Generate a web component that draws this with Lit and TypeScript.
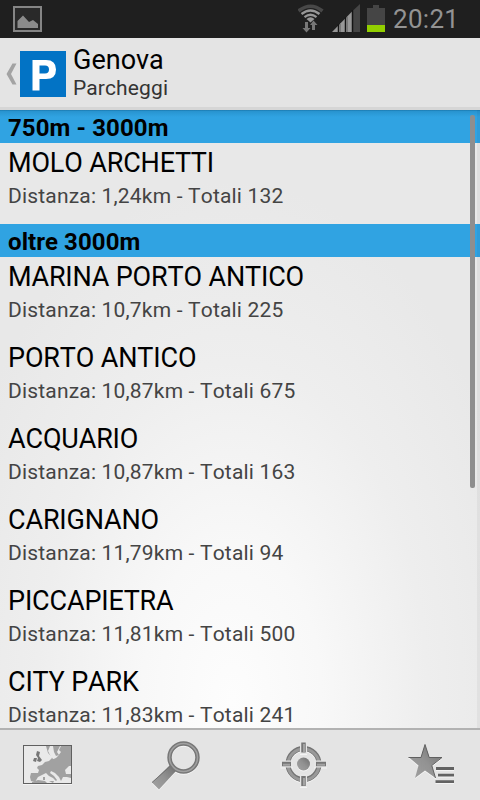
import { LitElement, html, css, svg } from "lit";
import { customElement } from "lit/decorators.js";

interface Parking { name: string; km: string; total: number; }
interface Group { label: string; items: Parking[]; }

const groups: Group[] = [
  { label: "750m - 3000m", items: [{ name: "MOLO ARCHETTI", km: "1,24", total: 132 }] },
  {
    label: "oltre 3000m",
    items: [
      { name: "MARINA PORTO ANTICO", km: "10,7", total: 225 },
      { name: "PORTO ANTICO", km: "10,87", total: 675 },
      { name: "ACQUARIO", km: "10,87", total: 163 },
      { name: "CARIGNANO", km: "11,79", total: 94 },
      { name: "PICCAPIETRA", km: "11,81", total: 500 },
      { name: "CITY PARK", km: "11,83", total: 241 },
    ],
  },
];

const metal = svg`<defs>
  <linearGradient id="m" x1="1" y1="0" x2="0" y2="1">
    <stop offset="0" stop-color="#6e6e6e"/><stop offset=".5" stop-color="#929292"/><stop offset="1" stop-color="#a2a2a2"/>
  </linearGradient></defs>`;

@customElement("status-bar")
class StatusBar extends LitElement {
  static styles = css`
    :host { display: flex; height: 38px; flex: none; background: #1f1f1f; align-items: flex-start; }
    svg { display: block; flex: none; }
    .gap { flex: 1; }
    .clock { width: 87px; font-size: 26px; font-weight: 380; line-height: 38px; letter-spacing: .3px; color: #939393; white-space: nowrap; }
  `;
  render() {
    return html`
      <svg width="50" height="38" viewBox="0 0 50 38">
        <rect x="14" y="7" width="27" height="24" fill="#292929" stroke="#858585" stroke-width="2"/>
        <path d="M17.500 28V21L23 15.500 29 22 33 20 38 24V28Z" fill="#8b8b8b"/>
      </svg>
      <div class="gap"></div>
      <svg width="95" height="38" viewBox="298 0 95 38">
        <g fill="none">
          <path d="M298.500 11Q310.500 1.500 322.500 11" stroke="#484848" stroke-width="3.600"/>
          <path d="M301.500 14Q310.500 7 319.500 14" stroke="#979797" stroke-width="2.400"/>
          <path d="M304.500 17.200Q310.500 12.300 316.500 17.200" stroke="#979797" stroke-width="2.200"/>
        </g>
        <path d="M306.500 19Q310.500 15.500 314.500 19L310.500 22.500Z" fill="#979797"/>
        <path d="M305 22H308V28H310.500L306.500 32.500 302.500 28H305Z" fill="#777"/>
        <path d="M312 30V25H310L313.500 20.500 317.500 25H315V30Z" fill="#777"/>
        <path d="M332 32L353.500 10V32Z" fill="#979797"/>
        <path d="M353 10.500L360 4V32H353Z" fill="#454545"/>
        <path d="M338.500 24V32M345.500 17V32M352.500 10V32" stroke="#151515" stroke-width="1.500"/>
        <path d="M340.500 23V32M347.500 16V32" stroke="#777" stroke-width="1"/>
        <path d="M367 8H373V5H379V8H385V25H367Z" fill="#454545"/>
        <path d="M367 25H385V32H367Z" fill="#92cf00"/>
      </svg>
      <div class="clock">20:21</div>`;
  }
}

@customElement("title-bar")
class TitleBar extends LitElement {
  static styles = css`
    :host { display: flex; height: 72px; box-sizing: border-box; flex: none; background: #e4e4e4; border-bottom: 3px solid #d6d6d6; }
    svg { display: block; flex: none; }
    .names { padding: 6px 0 0 7px; }
    .title { font-size: 27px; line-height: 32px; color: #000; letter-spacing: .05px; }
    .sub { font-size: 21px; line-height: 25px; color: #333; letter-spacing: .15px; }
  `;
  render() {
    return html`
      <svg width="66" height="69" viewBox="0 38 66 69">
        <path d="M12.500 63.500H16.500L11 74 16.500 84.500H12.500L6.500 74Z" fill="#a3a3a3"/>
        <rect x="20" y="51" width="46" height="46" fill="#0273c5"/>
        <path fill-rule="evenodd" d="M32.500 60H46Q56 60 56 69.500T46 79H39.500V90.500H32.500ZM39.500 65.500V73.500H45Q49 73.500 49 69.500T45 65.500Z" fill="#fff"/>
      </svg>
      <div class="names"><div class="title">Genova</div><div class="sub">Parcheggi</div></div>`;
  }
}

@customElement("parking-list")
class ParkingList extends LitElement {
  static styles = css`
    :host { display: block; position: relative; flex: 1; min-height: 0; overflow: hidden;
      background: radial-gradient(ellipse 300px 520px at 232px 590px, #fdfdfd 0, #f8f8f8 30%, #eee 65%, #e8e8e8 100%); }
    .head { height: 33px; line-height: 37px; padding-left: 8px; background: #30a3e2; color: #000; font-weight: 700; font-size: 24px; letter-spacing: .1px; }
    .row { height: 81px; box-sizing: border-box; padding: 4px 0 0 8px; font-kerning: none; }
    .name { font-size: 27px; line-height: 32px; color: #000; letter-spacing: -.15px; }
    .info { font-size: 21px; line-height: 25px; padding-top: 5px; color: #444; letter-spacing: .18px; }
    .shade { position: absolute; inset: 0 0 auto; height: 7px; background: linear-gradient(#0d5f90a0 0, #0d5f9038 20%, transparent); }
    .thumb { position: absolute; left: 470px; top: 5px; width: 5px; height: 373px; border-radius: 2px; background: #8e8e8e; }
    .edge { position: absolute; right: 0; top: 0; bottom: 0; width: 3px; background: #0000000a; }
  `;
  render() {
    return html`
      ${groups.map((g) => html`
        <div class="head"><span>${g.label}</span></div>
        ${g.items.map((p) => html`
          <div class="row">
            <div class="name"><span>${p.name}</span></div>
            <div class="info"><span>Distanza: ${p.km}km - Totali ${p.total}</span></div>
          </div>`)}`)}
      <div class="shade"></div><div class="edge"></div><div class="thumb"></div>`;
  }
}

@customElement("tool-bar")
class ToolBar extends LitElement {
  static styles = css`
    :host { display: grid; grid-template-columns: repeat(4, 120px); height: 72px; box-sizing: border-box; flex: none; background: #e4e4e4; border-top: 2px solid #b2b2b2; }
    svg { display: block; filter: drop-shadow(0 1px 0 #f4f4f4); }
  `;
  render() {
    return html`
      <svg width="120" height="70" viewBox="0 10 120 70">
        <rect x="23.500" y="25.500" width="48" height="38" fill="#e9e9e9"/>
        <path d="M46 26H54L55 31 53 33 53 37 49 41 45 42 42 45 38 46 37 48 39 50 38 53 31 53 30 57 31 61 35 62 38 57 42 55 46 53 49 56 53 58 56 61 57 60 54 56 50 53 51 51 55 53 59 57 61 61 63 57 67 57 71 58V54L66 54 65 50 69 46H71V26H61L59 30 61 32 58 36 56 38 53 39 51 36 48 33Z" fill="#a1a1a1"/>
        <path d="M50 26L48 31 51 37 54 39 56 35 54 32 57 26Z" fill="#e9e9e9"/>
        <path d="M53 26H60L57 32 59 35 56 36 54 32Z" fill="#a1a1a1"/>
        <path d="M37 31L40 32 39 36 42 40 40 42 37 41 38 38 36 35ZM34 38L37 38 36 42 33 41Z" fill="#777"/>
        <path d="M43 57H45V60H43ZM49 61L54 61 53 63ZM32 62L38 60 45 61 47 63H32Z" fill="#a1a1a1"/>
        <rect x="23.500" y="25.500" width="48" height="38" fill="none" stroke="#606060"/>
      </svg>
      <svg width="120" height="70" viewBox="0 10 120 70">${metal}
        <path d="M50 45L56 51 39 69.500 32 62.500Z" fill="url(#m)"/>
        <path d="M50.500 46L32 62.500" stroke="#707070"/>
        <circle cx="63.500" cy="37.500" r="14" fill="none" stroke="#777" stroke-width="4.500"/>
        <circle cx="63.500" cy="37.500" r="14" fill="none" stroke="#a0a0a0" stroke-width="1.500"/>
      </svg>
      <svg width="120" height="70" viewBox="0 10 120 70">${metal}
        <circle cx="63.500" cy="44" r="15.500" fill="none" stroke="#747474" stroke-width="5"/>
        <circle cx="63.500" cy="44.500" r="15.500" fill="none" stroke="#999" stroke-width="3"/>
        <path d="M63.500 21V34M63.500 54V67M40.500 44H53M74 44H87" stroke="#e6e6e6" stroke-width="7"/>
        <path d="M63.500 22.500V32.500M63.500 56V66M42 44H51M76 44H86" stroke="#777" stroke-width="4.500"/>
        <path d="M64 24V32M64 58V65.500M43 44.800H50M77 44.800H85" stroke="#a3a3a3" stroke-width="2"/>
        <circle cx="63.500" cy="44" r="6.500" fill="url(#m)"/>
      </svg>
      <svg width="120" height="70" viewBox="0 10 120 70">${metal}
        <path d="M65 24.500L69.200 37H82L71.800 45.500 75.500 58 65 50.500 55 58 58.500 45.500 48.500 37H61Z" fill="url(#m)"/>
        <path d="M65 24.500L69.200 37.500H82L71.800 45.500 75.500 58M48.500 37.500H61L65 24.500" fill="none" stroke="#606060"/>
        <path d="M76 48.500H94M78 55.200H94M75.500 61.700H94" stroke="#626262" stroke-width="2.800"/>
      </svg>`;
  }
}

@customElement("app-root")
class AppRoot extends LitElement {
  static styles = css`
    :host { display: flex; flex-direction: column; width: 480px; height: 800px; overflow: hidden; font-family: Roboto, "Noto Sans", sans-serif; }
  `;
  render() {
    return html`<status-bar></status-bar><title-bar></title-bar><parking-list></parking-list><tool-bar></tool-bar>`;
  }
}
